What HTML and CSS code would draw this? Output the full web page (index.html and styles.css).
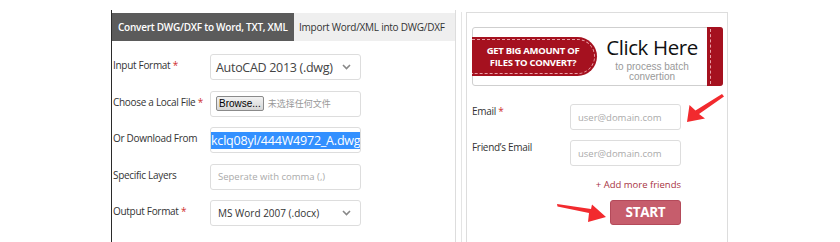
FILE: index.html
```html
<!DOCTYPE html>
<html lang="en">
<head>
    <meta charset="UTF-8">
    <title>DWG to Word</title>
    <link rel="stylesheet" href="styles.css">
</head>
<body>
<div class="page">
    <div class="converter">
        <ul class="tabs">
            <li class="active">Convert DWG/DXF to Word, TXT, XML</li>
            <li>Import Word/XML into DWG/DXF</li>
        </ul>
        <div class="form">
            <div class="row">
                <label>Input Format <em>*</em></label>
                <div class="field select big">AutoCAD 2013 (.dwg)<svg class="chev" width="9" height="6" viewBox="0 0 9 6"><polyline points="1,1 4.5,4.5 8,1"/></svg></div>
            </div>
            <div class="row">
                <label>Choose a Local File <em>*</em></label>
                <div class="field file"><span class="browse">Browse...</span><span class="nofile">未选择任何文件</span></div>
            </div>
            <div class="row">
                <label>Or Download From</label>
                <div class="field url"><span class="picked">kclq08yl/444W4972_A.dwg</span></div>
            </div>
            <div class="row">
                <label>Specific Layers</label>
                <div class="field hint">Seperate with comma (,)</div>
            </div>
            <div class="row">
                <label>Output Format <em>*</em></label>
                <div class="field select">MS Word 2007 (.docx)<svg class="chev" width="9" height="6" viewBox="0 0 9 6"><polyline points="1,1 4.5,4.5 8,1"/></svg></div>
            </div>
        </div>
    </div>
    <div class="divider"></div>
    <div class="side">
        <div class="promo">
            <div class="tag"><span>GET BIG AMOUNT OF<br>FILES TO CONVERT?</span></div>
            <div class="click">
                <b>Click Here</b>
                <span>to process batch</span>
                <span>convertion</span>
            </div>
            <div class="ribbon"></div>
        </div>
        <div class="mail">
            <div class="row">
                <label>Email <em>*</em></label>
                <div class="field hint">user@domain.com</div>
            </div>
            <div class="row">
                <label>Friend’s Email</label>
                <div class="field hint">user@domain.com</div>
            </div>
            <a href="#" class="more">+ Add more friends</a>
            <a href="#" class="start">START</a>
        </div>
    </div>
    <svg class="arrows" width="840" height="242" viewBox="0 0 840 242">
        <polygon points="722,94 724,96.5 699,114 705,118.5 687,122 689.5,105 695.5,110.5"/>
        <polygon points="557,204 557.5,206.5 589,213 588,222 606,217 592,204.5 591,209"/>
    </svg>
</div>
</body>
</html>
```

FILE: styles.css
```css
*{
    margin: 0;
    padding: 0;
    list-style: none;
    box-sizing: border-box;
}
body{
    background: #fff;
    font-family: "Open Sans", "Noto Sans", sans-serif;
    color: #333;
}
.page{
    position: relative;
    width: 840px;
    height: 242px;
    display: flex;
    align-items: flex-start;
    padding: 10px 0 0 111px;
    overflow: hidden;
}

/* left converter */
.converter{
    width: 345px;
    height: 232px;
    border-left: 1px solid #2b2b2b;
    border-right: 1px solid #ddd;
    padding-top: 3px;
}
.tabs{
    display: flex;
    height: 28px;
}
.tabs li{
    font-size: 10px;
    line-height: 28px;
    background: #efefef;
    color: #333;
    padding-left: 5px;
    letter-spacing: -0.25px;
    white-space: nowrap;
    overflow: hidden;
}
.tabs li.active{
    width: 182px;
    background: #5b5b5b;
    color: #fff;
    font-weight: 600;
    padding-left: 6px;
}
.tabs li:last-child{
    flex: 1;
}
.form{
    padding: 13px 0 0 1px;
    display: flex;
    flex-direction: column;
    gap: 10.5px;
}
.row{
    display: flex;
    align-items: flex-start;
}
.row label{
    width: 97px;
    font-size: 10px;
    line-height: 14px;
    letter-spacing: -0.3px;
    padding-top: 4px;
    color: #333;
}
.row label em{
    font-style: normal;
    color: #d03030;
}
.field{
    width: 151px;
    height: 26px;
    border: 1px solid #ddd;
    border-radius: 3px;
    display: flex;
    align-items: center;
    padding-left: 7px;
    font-size: 10px;
    color: #333;
    white-space: nowrap;
    overflow: hidden;
}
.field.big{
    font-size: 12.5px;
    letter-spacing: -0.3px;
    padding-left: 5px;
    color: #444;
}
.select{
    justify-content: space-between;
    padding-right: 9px;
}
.chev{
    flex-shrink: 0;
    fill: none;
    stroke: #888;
    stroke-width: 1.6;
}
.file{
    padding-left: 5px;
}
.browse{
    font-family: "Liberation Sans", sans-serif;
    font-size: 10px;
    line-height: 11px;
    color: #000;
    background: linear-gradient(#f2f2f2, #d6d6d6);
    border: 1px solid #8a8a8a;
    border-radius: 2px;
    padding: 1px 2px;
    margin-right: 4px;
}
.nofile{
    font-family: "Noto Sans CJK SC", sans-serif;
    font-size: 9px;
    color: #999;
}
.url{
    padding-left: 0;
}
.picked{
    background: #3390ff;
    color: #fff;
    font-size: 12.5px;
    line-height: 17px;
    letter-spacing: -0.2px;
}
.hint{
    font-size: 9.5px;
    color: #aaa;
}

.divider{
    width: 1px;
    height: 230px;
    margin: 2px 4px 0 5px;
    background: #e4e4e4;
}

/* right panel */
.side{
    width: 262px;
    height: 240px;
    margin-top: 2px;
    border: 1px solid #ddd;
    border-bottom: none;
    padding: 14px 4px 0 5px;
}
.promo{
    height: 59px;
    border: 1px solid #cfcfcf;
    border-radius: 3px;
    display: flex;
    align-items: flex-start;
}
.tag{
    width: 125px;
    height: 39px;
    margin: 9px 0 0 -1px;
    background: #a5111f;
    border-radius: 0 20px 20px 0;
    padding: 2px 2px 2px 0;
}
.tag span{
    display: flex;
    align-items: center;
    justify-content: center;
    height: 100%;
    border: 1px dashed #e9a0a8;
    border-left: none;
    border-radius: 0 18px 18px 0;
    color: #fff;
    font-size: 9.5px;
    font-weight: 700;
    line-height: 12px;
    text-align: center;
    letter-spacing: -0.3px;
}
.click{
    flex: 1;
    display: flex;
    flex-direction: column;
    align-items: center;
    padding-top: 7px;
}
.click b{
    font-weight: 400;
    font-size: 20.5px;
    line-height: 24px;
    margin-bottom: 2.5px;
    color: #111;
    letter-spacing: -0.4px;
}
.click span{
    font-family: "Liberation Sans", sans-serif;
    font-size: 10px;
    line-height: 10.5px;
    color: #999;
}
.ribbon{
    width: 16px;
    height: 59px;
    margin: -1px -1px 0 0;
    background: #a5111f;
    border-radius: 0 3px 3px 0;
    border-left: 3px solid #a5111f;
    position: relative;
}
.ribbon::before{
    content: "";
    position: absolute;
    left: 0;
    top: 2px;
    bottom: 2px;
    border-left: 1px dashed #e9a0a8;
}
.mail{
    width: 209px;
    margin-top: 18px;
    display: flex;
    flex-direction: column;
    gap: 10px;
}
.mail .row label{
    width: 98px;
    padding-top: 0;
}
.mail .field{
    width: 111px;
}
.more{
    align-self: flex-end;
    font-size: 9.5px;
    color: #a8343f;
    text-decoration: none;
    margin-top: 2px;
}
.start{
    align-self: flex-end;
    width: 71px;
    height: 25px;
    margin-top: -1px;
    background: #c65d6c;
    border: 1px solid #b44a5a;
    border-radius: 3px;
    color: #fff;
    font-weight: 700;
    font-size: 13.5px;
    line-height: 23px;
    text-align: center;
    text-decoration: none;
    letter-spacing: -0.3px;
}

.arrows{
    position: absolute;
    left: 0;
    top: 0;
    pointer-events: none;
}
.arrows polygon{
    fill: #f22a2e;
}
```
